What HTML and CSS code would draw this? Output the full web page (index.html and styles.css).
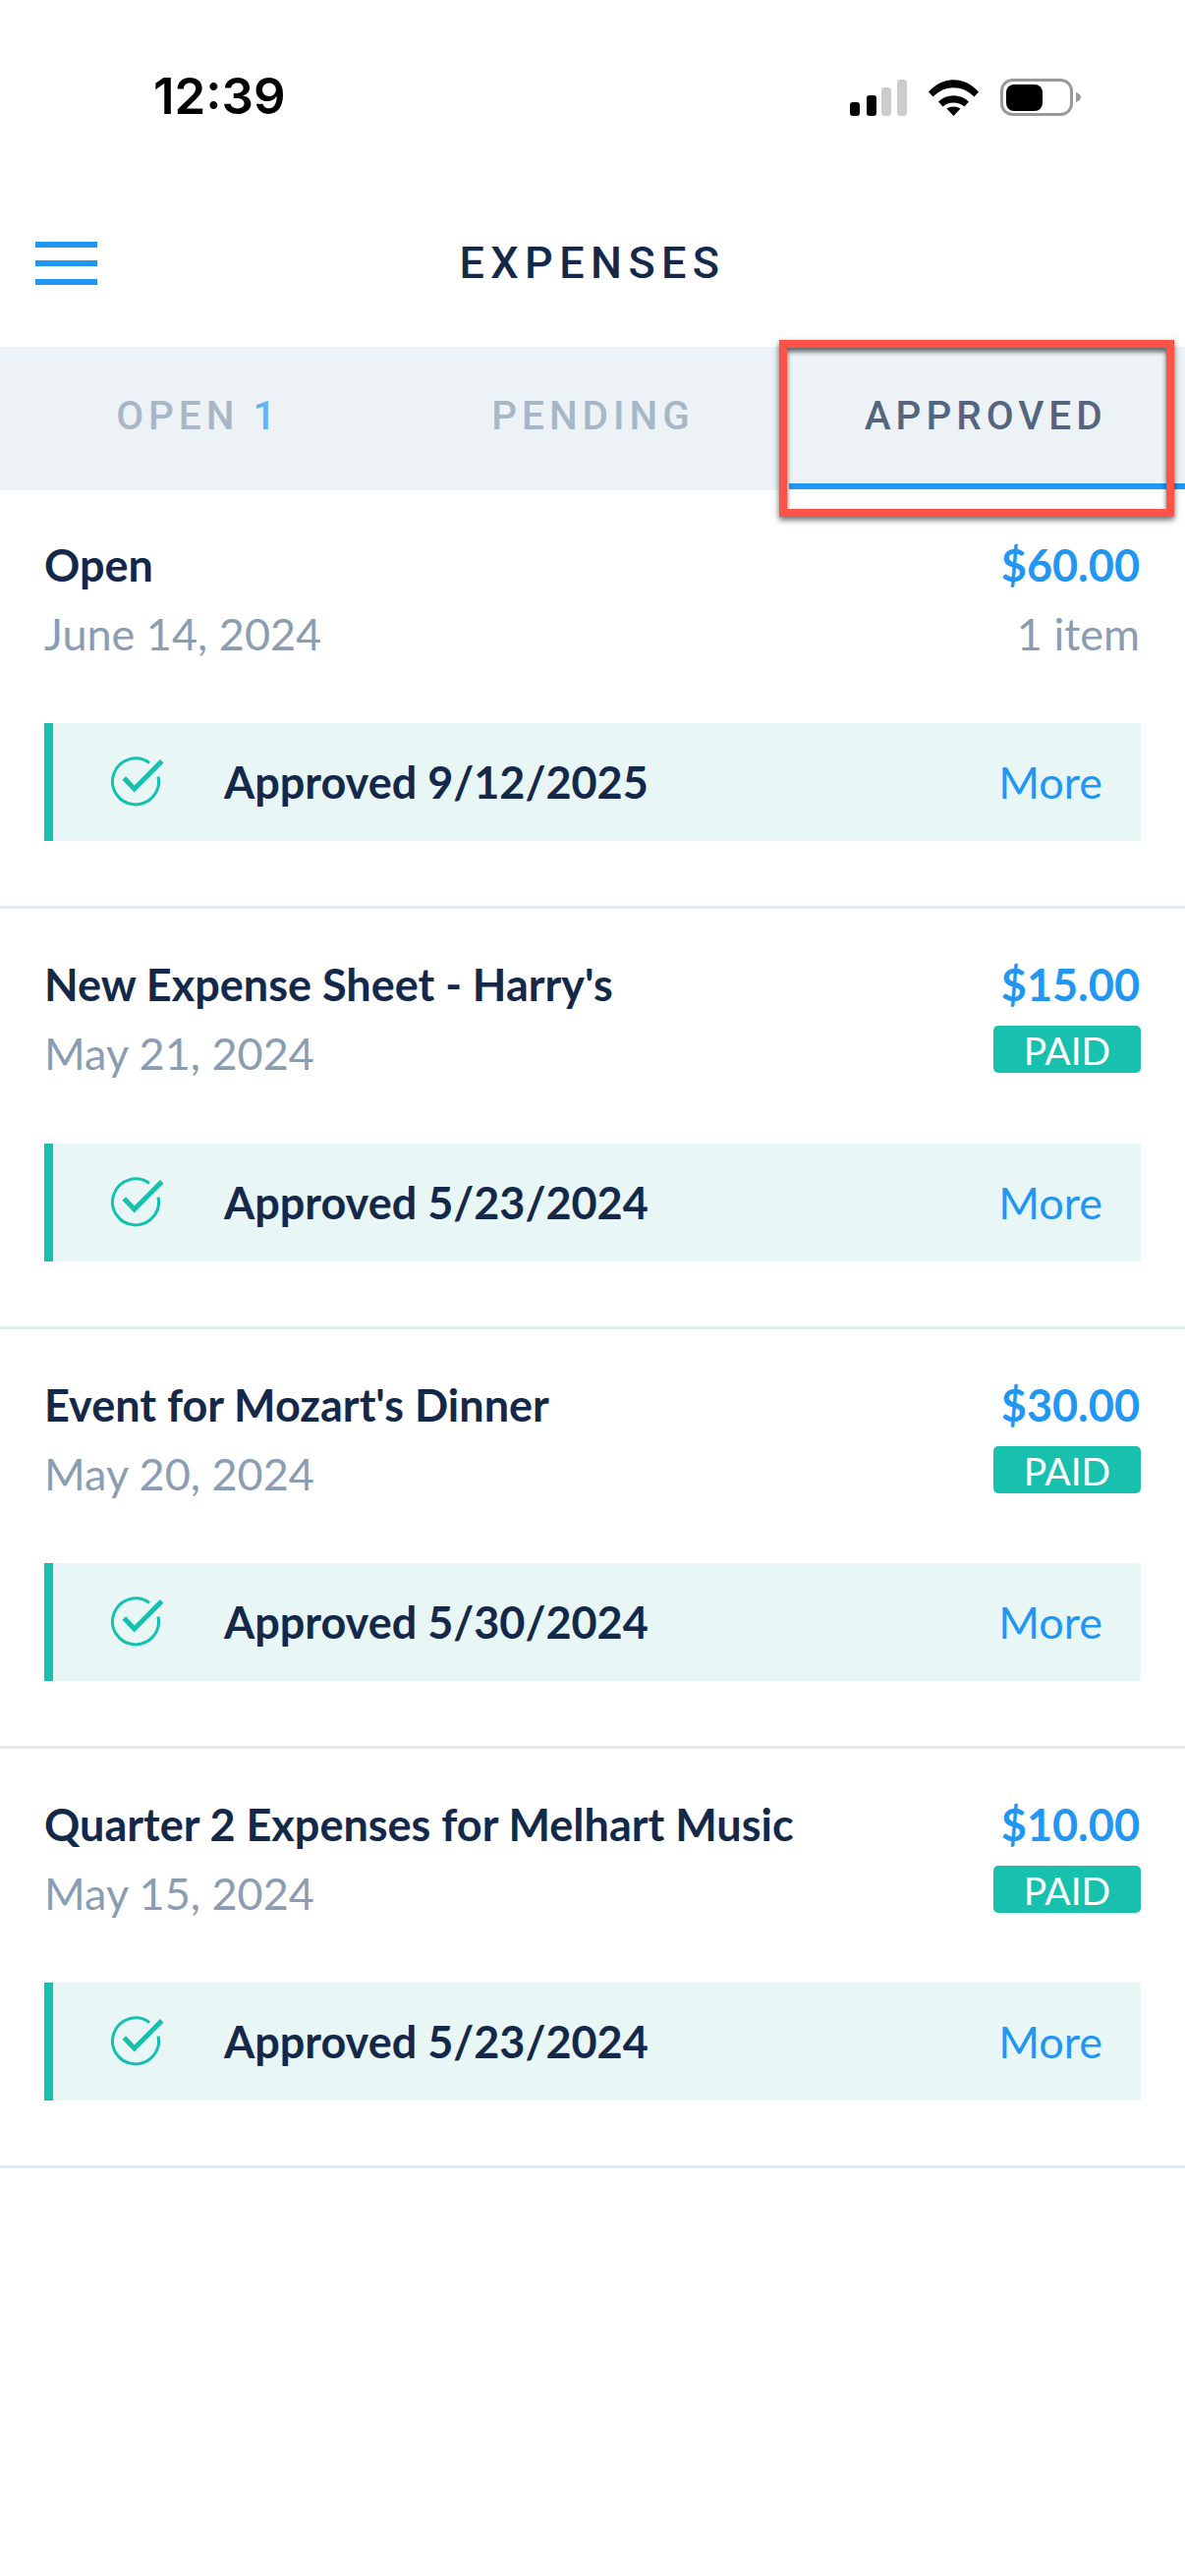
FILE: index.html
```html
<!DOCTYPE html>
<html lang="en">
<head>
    <meta charset="UTF-8">
    <meta name="viewport" content="width=device-width, initial-scale=1.0">
    <title>Expenses</title>
    <link rel="stylesheet" href="styles.css">
</head>
<body>
    <!-- Status bar -->
    <div class="status-bar">
        <span class="clock">12:39</span>
        <div class="status-icons">
            <svg class="signal" width="58" height="37" viewBox="0 0 58 37">
                <rect x="0" y="23" width="10" height="14" rx="3" fill="#000"/>
                <rect x="17" y="16" width="10" height="21" rx="3" fill="#000"/>
                <rect x="32" y="8" width="10" height="29" rx="3" fill="#ccc"/>
                <rect x="48" y="0" width="10" height="37" rx="3" fill="#ccc"/>
            </svg>
            <svg class="wifi" width="51" height="37" viewBox="0 0 51 37">
                <path d="M0 12.500C14.500 -4 36.500 -4 51 12.500L46.500 17.500C34.500 5 16.500 5 4.500 17.500Z" fill="#000"/>
                <path d="M10 22.500C18.500 14 32.500 14 41 22.500L36.500 27.500C30.500 22 20.500 22 14.500 27.500Z" fill="#000"/>
                <path d="M18.500 29.500C22.500 26.800 28.500 26.800 32.500 29.500L25.500 37Z" fill="#000"/>
            </svg>
            <svg class="battery" width="82" height="38" viewBox="0 0 82 38">
                <rect x="1.500" y="1.500" width="71" height="35" rx="11" fill="none" stroke="#999" stroke-width="3"/>
                <rect x="6" y="6" width="37" height="27" rx="8" fill="#000"/>
                <path d="M77 14C80 15 82 17 82 19C82 21 80 23 77 24Z" fill="#999"/>
            </svg>
        </div>
    </div>

    <!-- Header -->
    <div class="header">
        <div class="menu-icon">
            <span></span>
            <span></span>
            <span></span>
        </div>
        <h1 class="page-title">EXPENSES</h1>
    </div>

    <!-- Tabs -->
    <div class="tabs">
        <div class="tab">OPEN <span class="tab-count">1</span></div>
        <div class="tab">PENDING</div>
        <div class="tab tab-active">APPROVED<div class="highlight"></div></div>
    </div>

    <!-- Expense sheets -->
    <div class="sheet">
        <div class="sheet-top">
            <div>
                <div class="sheet-name">Open</div>
                <div class="sheet-date">June 14, 2024</div>
            </div>
            <div class="sheet-right">
                <div class="sheet-amount">$60.00</div>
                <div class="sheet-items">1 item</div>
            </div>
        </div>
        <div class="approval">
            <svg class="check" width="54" height="52" viewBox="0 0 54 52"><path d="M40 6.500A23.500 23.500 0 1 0 49 20.500" fill="none" stroke="#14c1ae" stroke-width="3"/><path d="M14.300 22L24.700 33L52.700 4.700" fill="none" stroke="#14c1ae" stroke-width="5"/></svg>
            <span class="approval-text">Approved 9/12/2025</span>
            <span class="more">More</span>
        </div>
    </div>

    <div class="sheet">
        <div class="sheet-top">
            <div>
                <div class="sheet-name">New Expense Sheet - Harry's</div>
                <div class="sheet-date">May 21, 2024</div>
            </div>
            <div class="sheet-right">
                <div class="sheet-amount">$15.00</div>
                <div class="paid">PAID</div>
            </div>
        </div>
        <div class="approval">
            <svg class="check" width="54" height="52" viewBox="0 0 54 52"><path d="M40 6.500A23.500 23.500 0 1 0 49 20.500" fill="none" stroke="#14c1ae" stroke-width="3"/><path d="M14.300 22L24.700 33L52.700 4.700" fill="none" stroke="#14c1ae" stroke-width="5"/></svg>
            <span class="approval-text">Approved 5/23/2024</span>
            <span class="more">More</span>
        </div>
    </div>

    <div class="sheet">
        <div class="sheet-top">
            <div>
                <div class="sheet-name">Event for Mozart's Dinner</div>
                <div class="sheet-date">May 20, 2024</div>
            </div>
            <div class="sheet-right">
                <div class="sheet-amount">$30.00</div>
                <div class="paid">PAID</div>
            </div>
        </div>
        <div class="approval">
            <svg class="check" width="54" height="52" viewBox="0 0 54 52"><path d="M40 6.500A23.500 23.500 0 1 0 49 20.500" fill="none" stroke="#14c1ae" stroke-width="3"/><path d="M14.300 22L24.700 33L52.700 4.700" fill="none" stroke="#14c1ae" stroke-width="5"/></svg>
            <span class="approval-text">Approved 5/30/2024</span>
            <span class="more">More</span>
        </div>
    </div>

    <div class="sheet">
        <div class="sheet-top">
            <div>
                <div class="sheet-name">Quarter 2 Expenses for Melhart Music</div>
                <div class="sheet-date">May 15, 2024</div>
            </div>
            <div class="sheet-right">
                <div class="sheet-amount">$10.00</div>
                <div class="paid">PAID</div>
            </div>
        </div>
        <div class="approval">
            <svg class="check" width="54" height="52" viewBox="0 0 54 52"><path d="M40 6.500A23.500 23.500 0 1 0 49 20.500" fill="none" stroke="#14c1ae" stroke-width="3"/><path d="M14.300 22L24.700 33L52.700 4.700" fill="none" stroke="#14c1ae" stroke-width="5"/></svg>
            <span class="approval-text">Approved 5/23/2024</span>
            <span class="more">More</span>
        </div>
    </div>
</body>
</html>
```

FILE: styles.css
```css
* {
    box-sizing: border-box;
}

body {
    font-family: 'Lato', sans-serif;
    margin: 0;
    padding: 0;
    width: 1206px;
    min-height: 2622px;
    background-color: #fff;
    color: #14294a;
    overflow-x: hidden;
}

/* Status bar */
.status-bar {
    display: flex;
    justify-content: space-between;
    align-items: center;
    height: 78px;
    margin-top: 60px;
    padding: 0 106px 0 156px;
}

.clock {
    padding-bottom: 4px;
    font-family: 'Inter', sans-serif;
    font-size: 51px;
    font-weight: 600;
    color: #000;
}

.status-icons {
    display: flex;
    align-items: center;
    gap: 22px;
}

.status-icons svg {
    display: block;
}

/* Header */
.header {
    display: grid;
    grid-template-columns: 1fr auto 1fr;
    align-items: center;
    height: 215px;
    padding: 44px 36px 0;
}

.menu-icon {
    width: 63px;
    display: flex;
    flex-direction: column;
    gap: 13px;
}

.menu-icon span {
    display: block;
    height: 6px;
    background-color: #2196f3;
}

.page-title {
    margin: 0;
    font-family: 'Roboto', sans-serif;
    font-size: 45px;
    font-weight: 500;
    letter-spacing: 6.400px;
    color: #14294a;
}

/* Tabs */
.tabs {
    display: flex;
    height: 145px;
    background-color: #edf2f6;
    box-shadow: 0 1px 1px rgba(0, 0, 0, 0.05);
}

.tab {
    flex: 1;
    display: flex;
    justify-content: center;
    align-items: center;
    gap: 14px;
    position: relative;
    padding: 0 0 6px 2px;
    font-family: 'Roboto', sans-serif;
    font-size: 40.500px;
    font-weight: 500;
    letter-spacing: 5px;
    color: #a8b7c7;
}

.tab-count {
    color: #64b3f5;
}

.tab-active {
    color: #54667e;
    border-bottom: 6px solid #2196f3;
    padding: 0 3px 0 0;
}

/* red box around the active tab */
.highlight {
    position: absolute;
    left: -10px;
    top: -7px;
    width: 402px;
    height: 180px;
    border: 8px solid #ff5347;
    box-shadow: 0 3px 6px rgba(0, 0, 0, 0.6), inset 0 4px 5px rgba(0, 0, 0, 0.6);
}

/* Expense sheets */
.sheet {
    height: 427.330px;
    padding: 50px 45px 0;
    border-bottom: 3px solid #e1ebf2;
}

.sheet-top {
    display: flex;
    justify-content: space-between;
    height: 188.400px;
}

.sheet-name {
    font-size: 45px;
    font-weight: 700;
    line-height: 54px;
}

.sheet-date {
    margin-top: 16px;
    font-size: 45px;
    line-height: 54px;
    color: #8a9db3;
}

.sheet-right {
    display: flex;
    flex-direction: column;
    align-items: flex-end;
}

.sheet-amount {
    padding-right: 1px;
    font-size: 45px;
    font-weight: 700;
    line-height: 54px;
    color: #2196f3;
}

.sheet-items {
    margin-top: 16px;
    padding-right: 1px;
    font-size: 45px;
    line-height: 54px;
    color: #8a9db3;
}

.paid {
    margin-top: 15px;
    width: 150px;
    height: 48px;
    border-radius: 5px;
    background-color: #18c1ae;
    color: #fff;
    font-size: 39px;
    line-height: 50px;
    text-align: center;
}

.approval {
    display: flex;
    align-items: center;
    height: 120px;
    padding: 0 39px 0 58px;
    background-color: #e8f6f6;
    border-left: 9px solid #14c1ae;
}

.check {
    flex: none;
    margin-right: 62px;
}

.approval-text {
    flex: 1;
    font-size: 45px;
    font-weight: 700;
}

.more {
    font-size: 45px;
    color: #2196f3;
}
```
